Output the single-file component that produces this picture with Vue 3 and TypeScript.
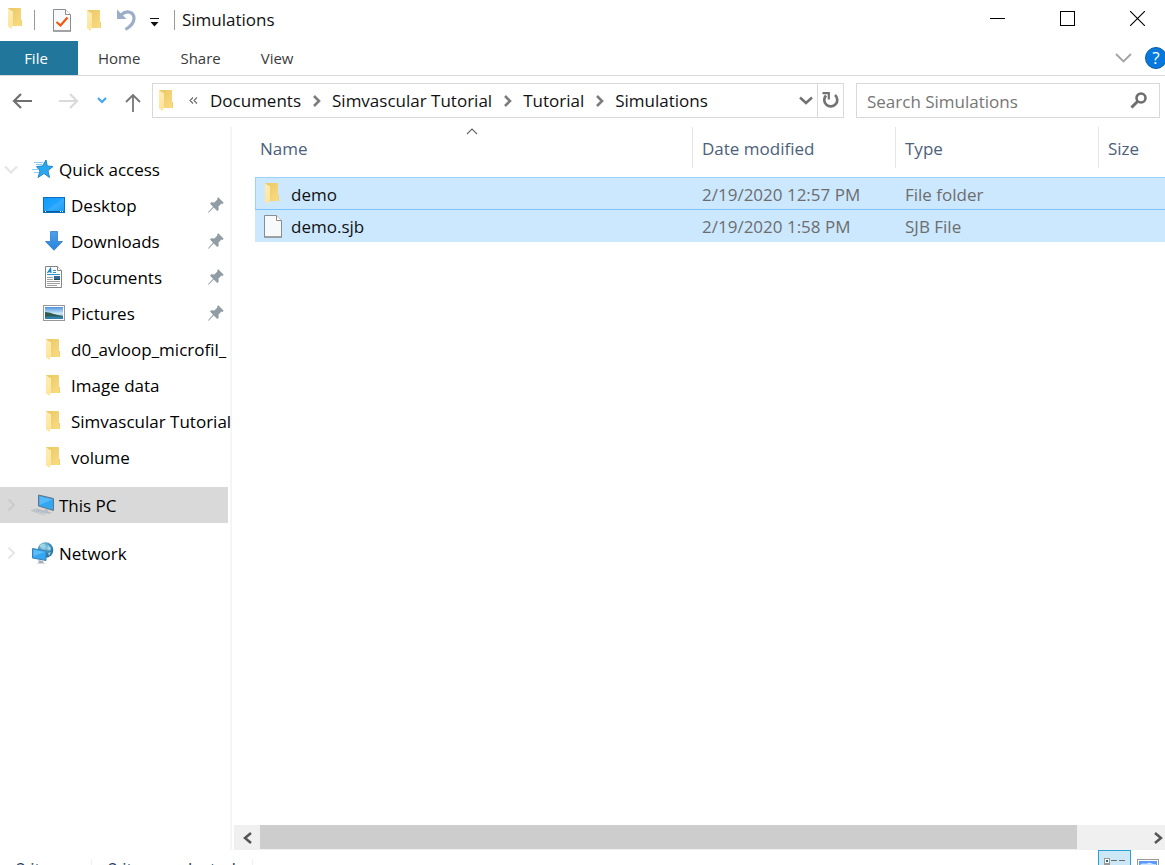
<script setup lang="ts">
import { ref } from 'vue'

interface QuickItem {
  label: string
  icon: 'desktop' | 'download' | 'document' | 'picture' | 'folder'
  pinned: boolean
}

interface FileRow {
  name: string
  icon: 'folder' | 'file'
  modified: string
  type: string
  size: string
}

const tabs: string[] = ['Home', 'Share', 'View']
const crumbs: string[] = ['Documents', 'Simvascular Tutorial', 'Tutorial', 'Simulations']

const quickItems: QuickItem[] = [
  { label: 'Desktop', icon: 'desktop', pinned: true },
  { label: 'Downloads', icon: 'download', pinned: true },
  { label: 'Documents', icon: 'document', pinned: true },
  { label: 'Pictures', icon: 'picture', pinned: true },
  { label: 'd0_avloop_microfil_', icon: 'folder', pinned: false },
  { label: 'Image data', icon: 'folder', pinned: false },
  { label: 'Simvascular Tutorial', icon: 'folder', pinned: false },
  { label: 'volume', icon: 'folder', pinned: false },
]

const files: FileRow[] = [
  { name: 'demo', icon: 'folder', modified: '2/19/2020 12:57 PM', type: 'File folder', size: '' },
  { name: 'demo.sjb', icon: 'file', modified: '2/19/2020 1:58 PM', type: 'SJB File', size: '' },
]

const query = ref('')
</script>

<template>
  <div class="explorer">
    <svg class="defs" width="0" height="0" aria-hidden="true">
      <defs>
        <linearGradient id="gFold" x1="0" y1="0" x2="1" y2="1">
          <stop offset="0" stop-color="#eac765" />
          <stop offset="1" stop-color="#fbdc82" />
        </linearGradient>
        <linearGradient id="gFlap" x1="0" y1="0" x2="0" y2="1">
          <stop offset="0" stop-color="#ffedb5" />
          <stop offset="1" stop-color="#ffe499" />
        </linearGradient>
        <linearGradient id="gDesk" x1="0" y1="0" x2="1" y2="1">
          <stop offset="0" stop-color="#109bfa" />
          <stop offset="0.5" stop-color="#1fa4ff" />
          <stop offset="0.52" stop-color="#36adff" />
          <stop offset="1" stop-color="#1c9cf5" />
        </linearGradient>
        <linearGradient id="gSky" x1="0" y1="0" x2="0" y2="1">
          <stop offset="0" stop-color="#4d94dd" />
          <stop offset="0.55" stop-color="#cfe8f7" />
          <stop offset="1" stop-color="#2d75a8" />
        </linearGradient>
        <linearGradient id="gArrow" x1="0" y1="0" x2="0" y2="1">
          <stop offset="0" stop-color="#4ba0ea" />
          <stop offset="1" stop-color="#2683dc" />
        </linearGradient>
        <radialGradient id="gGlobe" cx="0.4" cy="0.3" r="0.8">
          <stop offset="0" stop-color="#a9dcf0" />
          <stop offset="0.5" stop-color="#3a8fb9" />
          <stop offset="1" stop-color="#1c5d8b" />
        </radialGradient>
        <symbol id="folder" viewBox="0 0 14 21">
          <path d="M0 0H13V12H14V18H4L0 17Z" fill="url(#gFold)" />
          <path d="M0 0L3 2.500L5 3V17L4 18V21L0 18.500Z" fill="url(#gFlap)" />
          <path d="M13 12H14V18H13Z" fill="#f2d06d" />
        </symbol>
        <symbol id="page" viewBox="0 0 18 23">
          <path d="M0.500 0.500H12.500L17.500 5.500V22H0.500Z" fill="#f8f9fa" stroke="#8d8d8d" />
          <path d="M12.500 0.500V5.500H17.500" fill="#fff" stroke="#8d8d8d" />
          <path d="M0 22H18" stroke="#808080" />
        </symbol>
        <symbol id="desktop" viewBox="0 0 22 16">
          <rect x="0.500" y="0.500" width="21" height="15" fill="url(#gDesk)" stroke="#0a6fc0" />
          <path d="M1 14.500H21" stroke="#075a9e" />
          <path d="M2 14.500H3M17 14.500H18M19 14.500H20" stroke="#fff" />
        </symbol>
        <symbol id="download" viewBox="0 0 22 20">
          <path d="M7.500 0.500H14.500V10.500H19.500L11 19.300L2.500 10.500H7.500Z" fill="url(#gArrow)" stroke="#2472c0" stroke-width="0.700" />
        </symbol>
        <symbol id="document" viewBox="0 0 22 22">
          <path d="M2.500 0.500H14.500L18.500 4.500V21.500H2.500Z" fill="#fdfdfd" stroke="#858585" />
          <path d="M14.500 0.500V4.500H18.500" fill="#fff" stroke="#858585" />
          <path d="M4.500 7L7.500 2.500L8 7M5.500 5.500H8" fill="none" stroke="#1682cc" stroke-width="1.300" />
          <path d="M10 4.500H13M10 6.500H13M4 8.500H17" stroke="#2b91d0" />
          <path d="M4 11.500H10M4 13.500H10M4 15.500H17M4 17.500H17M4 19.500H14" stroke="#a0a0a0" />
          <rect x="11" y="10" width="6" height="4" fill="#36669a" />
          <path d="M11 13.500H17" stroke="#1b5144" />
        </symbol>
        <symbol id="picture" viewBox="0 0 22 16">
          <rect x="0.500" y="0.500" width="21" height="15" fill="#fff" stroke="#989898" />
          <rect x="2" y="2" width="18" height="12" fill="url(#gSky)" />
          <path d="M2 7C7 7 12 10 20 11V12.500H2Z" fill="#315c50" />
          <path d="M2 12C7 11 14 12 20 11.500V14H2Z" fill="#3180ae" />
        </symbol>
        <symbol id="pin" viewBox="0 0 16 16">
          <path d="M10.300 0.300L15.700 5.700L14.500 6.900L13.500 6.600L10.500 9.600L10.700 12.700L9.300 14L5.700 10.500L0.700 15.800L0 15.200L5 9.800L2 6.500L3.300 5.200L6.400 5.400L9.400 2.500L9.100 1.500Z" fill="#919ca4" />
        </symbol>
        <symbol id="expand" viewBox="0 0 9 14">
          <path d="M1.500 1.500L7 7L1.500 12.500" fill="none" stroke="currentColor" stroke-width="2" />
        </symbol>
      </defs>
    </svg>

    <header class="titlebar">
      <svg class="fold app-icon"><use href="#folder" /></svg>
      <span class="rule"></span>
      <button class="quick props" aria-label="Properties">
        <svg width="18" height="23" viewBox="0 0 18 23">
          <use href="#page" width="18" height="23" />
          <path d="M3.500 13L7.500 16.500L14.500 8.500" fill="none" stroke="#f2560f" stroke-width="2.200" />
        </svg>
      </button>
      <button class="quick" aria-label="New folder"><svg class="fold"><use href="#folder" /></svg></button>
      <button class="quick undo" aria-label="Undo">
        <svg width="20" height="22" viewBox="0 0 20 22">
          <path d="M4 6C10 0.500 17 3 17 9.500C17 14 13.500 17.500 8.500 20.500" fill="none" stroke="#9badc9" stroke-width="3.200" />
          <path d="M0 0.500V10H9.500Z" fill="#9badc9" />
        </svg>
      </button>
      <button class="quick more" aria-label="Customize toolbar">
        <svg width="9" height="9" viewBox="0 0 9 9"><path d="M0 0H9V1H0ZM0.500 4H8.500L4.500 8.500Z" fill="#111" /></svg>
      </button>
      <span class="rule title-rule"></span>
      <h1>Simulations</h1>
      <div class="caption">
        <button aria-label="Minimize"><svg width="15" height="15"><path d="M0 7.500H15" stroke="#000" /></svg></button>
        <button aria-label="Maximize"><svg width="15" height="15"><rect x="0.500" y="0.500" width="14" height="14" fill="none" stroke="#000" /></svg></button>
        <button class="close" aria-label="Close"><svg width="15" height="15"><path d="M0 0L15 15M15 0L0 15" stroke="#000" stroke-width="1.100" /></svg></button>
      </div>
    </header>

    <nav class="ribbon" aria-label="Ribbon">
      <button class="tab file">File</button>
      <button v-for="tab in tabs" :key="tab" class="tab">{{ tab }}</button>
      <div class="ribbon-end">
        <button aria-label="Expand ribbon"><svg width="17" height="10"><path d="M1 1L8.500 8.500L16 1" fill="none" stroke="#a3a3a3" stroke-width="1.800" /></svg></button>
        <button class="help" aria-label="Help">?</button>
      </div>
    </nav>

    <div class="navbar">
      <div class="arrows">
        <button class="back" aria-label="Back"><svg width="20" height="16"><path d="M20 8H2M9 1L2 8L9 15" fill="none" stroke="#6f6f6f" stroke-width="2.200" /></svg></button>
        <button class="forward" aria-label="Forward" disabled><svg width="20" height="16"><path d="M0 8H18M11 1L18 8L11 15" fill="none" stroke="#dadada" stroke-width="2.200" /></svg></button>
        <button class="recent" aria-label="Recent locations"><svg width="10" height="7"><path d="M1 1L5 5L9 1" fill="none" stroke="#42a5f8" stroke-width="2.200" /></svg></button>
        <button class="up" aria-label="Up"><svg width="16" height="19"><path d="M8 19V2M1 9L8 2L15 9" fill="none" stroke="#757575" stroke-width="1.800" /></svg></button>
      </div>
      <div class="address">
        <svg class="fold"><use href="#folder" /></svg>
        <button class="root" aria-label="Parent folders"><svg width="9" height="7"><path d="M4 0.500L1 3.500L4 6.500M8 0.500L5 3.500L8 6.500" fill="none" stroke="#666" stroke-width="1.100" /></svg></button>
        <template v-for="(crumb, i) in crumbs" :key="crumb">
          <svg v-if="i > 0" class="sep" width="8" height="12"><path d="M1 1L6 6L1 11" fill="none" stroke="#7c7c7c" stroke-width="2.600" /></svg>
          <button class="crumb">{{ crumb }}</button>
        </template>
        <button class="history" aria-label="Previous locations"><svg width="14" height="9"><path d="M1 1.500L7 7L13 1.500" fill="none" stroke="#727272" stroke-width="2.500" /></svg></button>
        <button class="refresh" aria-label="Refresh">
          <svg width="17" height="17" viewBox="0 0 17 17">
            <path d="M13 3A6.500 6.500 0 1 1 4 3.500" fill="none" stroke="#737373" stroke-width="2.700" />
            <path d="M0.500 1.200H6.800V7.500" fill="none" stroke="#737373" stroke-width="2.200" />
          </svg>
        </button>
      </div>
      <label class="search">
        <input v-model="query" type="text" placeholder="Search Simulations" aria-label="Search Simulations" />
        <svg width="17" height="17"><circle cx="11" cy="6" r="4.500" fill="none" stroke="#6d6d6d" stroke-width="2.600" /><path d="M8 9L1.500 15.500" stroke="#6d6d6d" stroke-width="3" /></svg>
      </label>
    </div>

    <main class="body">
      <aside class="sidebar">
        <button class="node">
          <svg class="toggle" width="14" height="9"><path d="M1 1.500L7 7.500L13 1.500" fill="none" stroke="#e6e6e6" stroke-width="2.400" /></svg>
          <svg class="node-icon" width="24" height="20" viewBox="0 0 24 20">
            <path d="M15 1L16.300 7L22 7.500L17 11.500L18.500 18.500L13 14.500L7 18.500L9 12L5.500 7.500L11.500 7Z" fill="#2ba7ef" stroke="#1580c4" stroke-width="0.900" />
            <path d="M3 3.500H12M5 5.500H11M1 10.500H8M3 13.500H8" stroke="#8dcdf4" />
          </svg>
          <span>Quick access</span>
        </button>
        <button v-for="item in quickItems" :key="item.label" class="leaf">
          <svg class="leaf-icon" :class="item.icon"><use :href="'#' + item.icon" /></svg>
          <span class="leaf-label">{{ item.label }}</span>
          <svg v-if="item.pinned" class="pin"><use href="#pin" /></svg>
        </button>
        <button class="node spaced selected">
          <svg class="toggle" width="14" height="14"><use href="#expand" x="3" width="9" height="14" /></svg>
          <svg class="node-icon" width="24" height="22" viewBox="0 0 24 22">
            <path d="M7.500 1L22.500 4.500V16.500L7.500 12Z" fill="#31a7f4" stroke="#69747d" />
            <path d="M8.500 2.500L21.500 5.500L8.500 11Z" fill="#55b9fa" />
            <path d="M0.500 16.500L5 15L16.500 18L12 20.500Z" fill="#e9edf0" stroke="#a5aeb6" stroke-width="0.700" />
            <path d="M3 16.500L13 19M5 15.800L15 18.300" stroke="#949da6" stroke-width="0.700" />
            <path d="M14 14.500L17 15.500V17.500L21 18.500L18 20L13 18.500Z" fill="#b4bec6" />
          </svg>
          <span>This PC</span>
        </button>
        <button class="node spaced">
          <svg class="toggle" width="14" height="14"><use href="#expand" x="3" width="9" height="14" /></svg>
          <svg class="node-icon" width="24" height="22" viewBox="0 0 24 22">
            <circle cx="14.500" cy="8" r="7.800" fill="url(#gGlobe)" />
            <path d="M9 3C12 0.500 15 2 14 4L11 6L9 5ZM17 3L20 6L19 9L16 7ZM17 11L20 10L18 14Z" fill="#9fd4e3" />
            <path d="M1.500 6.500L15 9V18.500L1.500 16Z" fill="#35a7f2" stroke="#3c7fae" />
            <path d="M2.500 7.700L14 10L2.500 14Z" fill="#5bbdfc" />
            <path d="M7 18L12 19V20L14 21.500H6L8 20Z" fill="#a5b0b8" />
          </svg>
          <span>Network</span>
        </button>
      </aside>

      <section class="content">
        <div class="listing">
          <svg class="sort" width="12" height="7"><path d="M1 6L6 1L11 6" fill="none" stroke="#666" stroke-width="1.100" /></svg>
          <table>
            <colgroup><col class="c-name" /><col class="c-mid" /><col class="c-mid" /><col /></colgroup>
            <thead>
              <tr>
                <th scope="col"><div>Name</div></th>
                <th scope="col"><div>Date modified</div></th>
                <th scope="col"><div>Type</div></th>
                <th scope="col"><div>Size</div></th>
              </tr>
            </thead>
            <tbody>
              <tr v-for="(file, i) in files" :key="file.name" :class="{ focused: i === 0 }">
                <td>
                  <div class="name">
                    <svg :class="file.icon === 'folder' ? 'fold' : 'file-icon'"><use :href="file.icon === 'folder' ? '#folder' : '#page'" /></svg>
                    <span>{{ file.name }}</span>
                  </div>
                </td>
                <td>{{ file.modified }}</td>
                <td>{{ file.type }}</td>
                <td>{{ file.size }}</td>
              </tr>
            </tbody>
          </table>
        </div>
        <div class="scrollbar">
          <button aria-label="Scroll left"><svg width="9" height="12"><path d="M8 1L2 6L8 11" fill="none" stroke="#555" stroke-width="2.500" /></svg></button>
          <div class="track"><div class="thumb"></div></div>
          <button class="right" aria-label="Scroll right"><svg width="9" height="12"><path d="M1 1L7 6L1 11" fill="none" stroke="#555" stroke-width="2.500" /></svg></button>
        </div>
      </section>
    </main>

    <footer class="status">
      <span class="count">2 items</span>
      <span class="chosen">2 items selected</span>
      <div class="views">
        <button class="active" aria-label="Details view">
          <svg width="22" height="22"><g fill="#fff" stroke="#999"><rect x="0.500" y="0.500" width="5" height="5" /><rect x="0.500" y="6.500" width="5" height="5" /><rect x="0.500" y="12.500" width="5" height="5" /></g><path d="M2 3H4M2 9H4M2 15H4" stroke="#1c6978" stroke-width="2" /><path d="M7 2.500H13M15 2.500H21M7 8.500H13M15 8.500H21M7 14.500H13M15 14.500H21" stroke="#6c6c6c" /></svg>
        </button>
        <button aria-label="Large icons view">
          <svg width="22" height="18"><rect x="0.500" y="0.500" width="21" height="16" fill="#fff" stroke="#999" /><rect x="2" y="2" width="18" height="13" fill="#5b9af8" /><path d="M3 6C6 3 8 6 11 4C14 3 16 6 19 5V9H3Z" fill="#cfe5ff" /></svg>
        </button>
      </div>
    </footer>
  </div>
</template>

<style>
body {
  margin: 0;
  background: #fff;
}
</style>

<style scoped>
.explorer {
  display: flex;
  flex-direction: column;
  height: 100vh;
  overflow: hidden;
  font-family: "Open Sans", "Noto Sans", sans-serif;
  font-size: 17px;
  line-height: 24px;
  color: #111;
  background: #fff;
}
.defs {
  position: absolute;
}
svg {
  display: block;
  flex: none;
}
button {
  display: flex;
  align-items: center;
  justify-content: center;
  flex: none;
  margin: 0;
  padding: 0;
  border: 0;
  background: none;
  font: inherit;
  color: inherit;
  white-space: nowrap;
}
.fold {
  width: 14px;
  height: 21px;
}

.titlebar {
  display: flex;
  align-items: center;
  height: 37px;
  padding: 0 0 4px 8px;
}
.rule {
  width: 1px;
  height: 20px;
  margin: 2px 2px 0 12px;
  background: #999;
}
.quick {
  width: 32px;
  padding-top: 3px;
}
.quick.props {
  margin-left: 9px;
}
.quick.undo {
  width: 34px;
}
.quick.more {
  width: 20px;
  padding-top: 7px;
}
.title-rule {
  margin: 2px 7px 0 10px;
}
h1 {
  margin: 0;
  padding-top: 2px;
  font-size: 17px;
  font-weight: 400;
}
.caption {
  display: flex;
  margin-left: auto;
}
.caption button {
  width: 70px;
  height: 37px;
}
.caption .close {
  width: 63px;
  justify-content: flex-end;
  padding-right: 20px;
}

.ribbon {
  display: flex;
  height: 34px;
  border-bottom: 1px solid #dadada;
  font-size: 15px;
  color: #3b3b3b;
}
.tab {
  padding: 0 20px;
}
.tab.file {
  width: 78px;
  padding: 0 6px 0 0;
  color: #fff;
  background: #21769b;
}
.ribbon-end {
  display: flex;
  align-items: center;
  gap: 13px;
  margin-left: auto;
}
.help {
  width: 22px;
  height: 22px;
  margin-right: -2px;
  border: 1px solid #075ea8;
  border-radius: 50%;
  font-size: 17px;
  color: #fff;
  background: #0879dc;
}

.navbar {
  display: flex;
  height: 35px;
  padding: 7px 5px 9px 12px;
}
.arrows {
  display: flex;
  align-items: center;
  width: 140px;
}
.forward {
  margin-left: 27px;
}
.recent {
  margin-left: 18px;
}
.up {
  margin: 3px 0 0 18px;
}
.address {
  display: flex;
  align-items: center;
  flex: 1;
  min-width: 0;
  box-sizing: border-box;
  padding-left: 6px;
  border: 1px solid #d9d9d9;
}
.root {
  width: 37px;
  padding-left: 4px;
  box-sizing: border-box;
}
.sep {
  margin: 0 11px 0 12px;
}
.history {
  margin-left: auto;
  padding: 0 4px;
}
.refresh {
  width: 26px;
  align-self: stretch;
  border-left: 1px solid #d9d9d9;
}
.search {
  display: flex;
  align-items: center;
  box-sizing: border-box;
  width: 304px;
  margin-left: 12px;
  padding: 0 12px 0 10px;
  border: 1px solid #d9d9d9;
}
.search input {
  flex: 1;
  min-width: 0;
  padding: 2px 0 0;
  border: 0;
  outline: 0;
  background: none;
  font: inherit;
  color: #111;
}
.search input::placeholder {
  color: #767676;
  opacity: 1;
}

.body {
  display: flex;
  flex: 1;
  min-height: 0;
}
.sidebar {
  flex: none;
  width: 228px;
  padding: 24px 2px 0 0;
  border-right: 2px solid #f5f5f5;
  color: #000;
}
.node,
.leaf {
  justify-content: flex-start;
  width: 100%;
  height: 36px;
}
.node {
  padding-left: 4px;
}
.node span,
.leaf-label,
.name span {
  padding-top: 2px;
}
.toggle {
  color: #e6e6e6;
}
.node-icon {
  margin: 0 4px 0 13px;
}
.spaced {
  margin-top: 12px;
}
.selected {
  background: #d9d9d9;
}
.selected .toggle {
  color: #cbcbcb;
}
.leaf {
  gap: 6px;
  padding-left: 43px;
}
.leaf-icon {
  width: 22px;
  height: 22px;
}
.leaf-icon.folder {
  width: 20px;
  height: 21px;
  margin-right: 2px;
}
.leaf-label {
  flex: 1;
  min-width: 0;
  text-align: left;
}
.pin {
  width: 16px;
  height: 16px;
  margin-right: 4px;
}

.content {
  display: flex;
  flex: 1;
  flex-direction: column;
  min-width: 0;
  padding-left: 2px;
}
.listing {
  position: relative;
  flex: 1;
  padding-left: 21px;
}
.sort {
  position: absolute;
  top: 1px;
  left: 232px;
}
table {
  width: 100%;
  table-layout: fixed;
  border-spacing: 0;
}
.c-name {
  width: 438px;
}
.c-mid {
  width: 203px;
}
th {
  padding: 0 0 9px;
  font-weight: 400;
  text-align: left;
  color: #4c607a;
}
th div {
  height: 41px;
  padding-left: 9px;
  border-right: 1px solid #e5e5e5;
  line-height: 43px;
}
th:first-child div {
  padding-left: 5px;
}
th:last-child div {
  border-right: 0;
}
td {
  height: 30px;
  padding: 2px 0 0 9px;
  color: #6d6d6d;
  background: #cce8ff;
}
td:first-child {
  height: 32px;
  padding: 0 0 0 9px;
  color: #111;
}
.focused td {
  height: 29px;
  border-top: 1px solid #99d1ff;
  border-bottom: 1px solid #7cc3fc;
}
.focused td:first-child {
  height: 31px;
  padding-left: 8px;
  border-left: 1px solid #99d1ff;
}
.name {
  display: flex;
  align-items: center;
}
.name svg {
  margin: 0 9px 0 0;
}
.name .fold {
  margin: 0 12px 0 1px;
}
.file-icon {
  width: 18px;
  height: 23px;
}

.scrollbar {
  display: flex;
  height: 25px;
  background: #f0f0f0;
}
.scrollbar button {
  width: 26px;
}
.scrollbar .right {
  justify-content: flex-end;
  padding-right: 2px;
}
.track {
  flex: 1;
}
.thumb {
  width: 93%;
  height: 24px;
  background: #cdcdcd;
}

.status {
  display: flex;
  flex: none;
  height: 34px;
  margin-bottom: -19px;
  font-size: 17px;
  color: #1e395b;
}
.status span {
  box-sizing: border-box;
  height: 25px;
  margin-top: 9px;
  padding-left: 16px;
  border-right: 1px solid #f0f0f0;
  line-height: 20px;
  white-space: nowrap;
}
.count {
  width: 92px;
}
.chosen {
  width: 161px;
}
.views {
  display: flex;
  margin-left: auto;
}
.views button {
  align-items: flex-start;
  box-sizing: border-box;
  width: 34px;
  padding-top: 9px;
}
.views .active {
  width: 33px;
  padding-top: 7px;
  border: 1px solid #2a9fd6;
  background: #cce8f6;
}
</style>
